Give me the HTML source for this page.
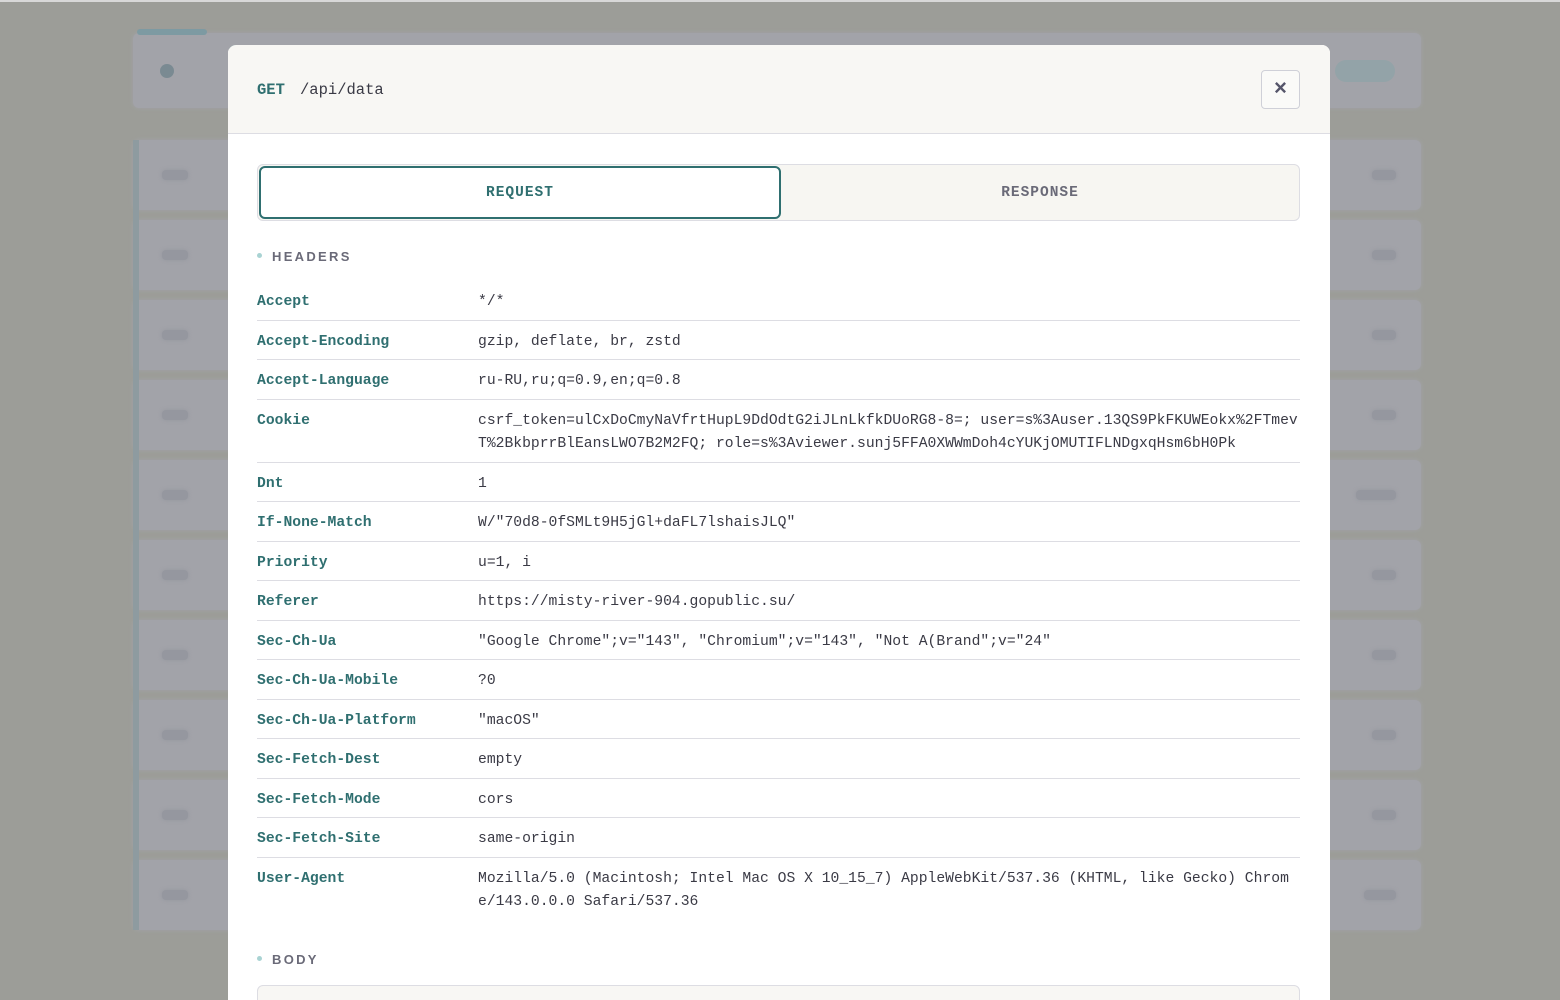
<!DOCTYPE html>
<html><head><meta charset="utf-8"><style>
*{box-sizing:border-box;margin:0;padding:0}
html,body{width:1560px;height:1000px;overflow:hidden}
body{background:#9c9d98;font-family:"Liberation Sans",sans-serif;position:relative}
.topline{position:absolute;left:0;top:0;width:1560px;height:2px;background:#d8d8d8}
.bg{position:absolute;background:#a2a3a9;border-radius:6px;box-shadow:0 0 4px #a2a3a9}
.bgbar{position:absolute;left:133px;width:6px;background:#8e9ba0}
.blob{position:absolute;background:#95979f;border-radius:4px;height:10px;box-shadow:0 0 4px #95979f}
.modal{position:absolute;left:228px;top:45px;width:1102px;height:955px;background:#fff;border-radius:8px 8px 0 0;overflow:hidden}
.accent{position:absolute;left:0;top:0;width:74px;height:4px;background:#3a7e80;border-radius:0 0 3px 0}
.head{height:89px;background:#f8f7f4;border-bottom:1px solid #dddde3;position:relative;font-family:"Liberation Mono",monospace;font-size:15.5px}
.head .m{position:absolute;left:29px;top:36px;color:#2f6f70;font-weight:bold}
.head .p{position:absolute;left:72px;top:36px;color:#3a3a45}
.close{position:absolute;left:1033px;top:25px;width:39px;height:39px;border:1px solid #cfd0d8;border-radius:4px;background:#fafaf8;text-align:center;line-height:38px;font-size:22px;color:#55556a;font-weight:bold}
.tabs{position:absolute;left:29px;top:119px;width:1043px;height:57px;border:1px solid #dddde3;border-radius:6px;background:#f7f6f2}
.tab1{position:absolute;left:1px;top:1px;width:522px;height:53px;border:2.5px solid #2f6f70;border-radius:6px;background:#fff;text-align:center;line-height:50px;font-family:"Liberation Mono",monospace;font-size:14.5px;font-weight:bold;color:#2f6f70;letter-spacing:1px}
.tab2{position:absolute;left:523px;top:0;width:518px;height:55px;text-align:center;line-height:57px;font-family:"Liberation Mono",monospace;font-size:14.5px;font-weight:bold;color:#6a6a78;letter-spacing:1px}
.sec{position:absolute;left:29px;font-family:"Liberation Sans",sans-serif;font-size:13px;font-weight:bold;color:#6a6a78;letter-spacing:2.3px}
.sec:before{content:"";display:inline-block;width:5px;height:5px;border-radius:50%;background:#a9d3d3;margin-right:10px;vertical-align:middle;position:relative;top:-2px}
.rows{position:absolute;left:29px;top:236px;width:1043px;font-family:"Liberation Mono",monospace;font-size:14.7px;line-height:23.5px}
.r{display:flex;padding:10px 0 5px;border-bottom:1px solid #dddde3}
.r:last-child{border-bottom:none}
.k{width:221px;flex:none;color:#2f6f70;font-weight:bold}
.v{flex:1;color:#3a3a45;word-break:break-all}
.body{position:absolute;left:29px;top:940px;width:1043px;height:60px;border:1px solid #dddde3;border-radius:6px;background:#f8f7f4}
</style></head><body>
<div class="topline"></div>
<div class="bg" style="left:133px;top:33px;width:1288px;height:75px"></div>
<div style="position:absolute;left:137px;top:29px;width:70px;height:6px;background:#7d9aa2;border-radius:3px"></div>
<div style="position:absolute;left:160px;top:64px;width:14px;height:14px;background:#7a8a92;border-radius:50%"></div>
<div style="position:absolute;left:1335px;top:60px;width:60px;height:22px;background:#93a3a8;border-radius:11px"></div>
<div class="bg" style="left:133px;top:140px;width:1288px;height:70px"></div>
<div class="bg" style="left:133px;top:220px;width:1288px;height:70px"></div>
<div class="bg" style="left:133px;top:300px;width:1288px;height:70px"></div>
<div class="bg" style="left:133px;top:380px;width:1288px;height:70px"></div>
<div class="bg" style="left:133px;top:460px;width:1288px;height:70px"></div>
<div class="bg" style="left:133px;top:540px;width:1288px;height:70px"></div>
<div class="bg" style="left:133px;top:620px;width:1288px;height:70px"></div>
<div class="bg" style="left:133px;top:700px;width:1288px;height:70px"></div>
<div class="bg" style="left:133px;top:780px;width:1288px;height:70px"></div>
<div class="bg" style="left:133px;top:860px;width:1288px;height:70px"></div>
<div class="bgbar" style="top:140px;height:790px"></div>
<div class="blob" style="left:162px;top:170px;width:26px"></div>
<div class="blob" style="left:162px;top:250px;width:26px"></div>
<div class="blob" style="left:162px;top:330px;width:26px"></div>
<div class="blob" style="left:162px;top:410px;width:26px"></div>
<div class="blob" style="left:162px;top:490px;width:26px"></div>
<div class="blob" style="left:162px;top:570px;width:26px"></div>
<div class="blob" style="left:162px;top:650px;width:26px"></div>
<div class="blob" style="left:162px;top:730px;width:26px"></div>
<div class="blob" style="left:162px;top:810px;width:26px"></div>
<div class="blob" style="left:162px;top:890px;width:26px"></div>
<div class="blob" style="left:1372px;top:170px;width:24px"></div>
<div class="blob" style="left:1372px;top:250px;width:24px"></div>
<div class="blob" style="left:1372px;top:330px;width:24px"></div>
<div class="blob" style="left:1372px;top:410px;width:24px"></div>
<div class="blob" style="left:1356px;top:490px;width:40px"></div>
<div class="blob" style="left:1372px;top:570px;width:24px"></div>
<div class="blob" style="left:1372px;top:650px;width:24px"></div>
<div class="blob" style="left:1372px;top:730px;width:24px"></div>
<div class="blob" style="left:1372px;top:810px;width:24px"></div>
<div class="blob" style="left:1364px;top:890px;width:32px"></div>
<div class="modal">
<div class="accent"></div>
<div class="head"><span class="m">GET</span><span class="p">/api/data</span><div class="close">×</div></div>
<div class="tabs"><div class="tab1">REQUEST</div><div class="tab2">RESPONSE</div></div>
<div class="sec" style="top:204px">HEADERS</div>
<div class="rows">
<div class="r"><div class="k">Accept</div><div class="v">*/*</div></div>
<div class="r"><div class="k">Accept-Encoding</div><div class="v">gzip, deflate, br, zstd</div></div>
<div class="r"><div class="k">Accept-Language</div><div class="v">ru-RU,ru;q=0.9,en;q=0.8</div></div>
<div class="r"><div class="k">Cookie</div><div class="v">csrf_token=ulCxDoCmyNaVfrtHupL9DdOdtG2iJLnLkfkDUoRG8-8=; user=s%3Auser.13QS9PkFKUWEokx%2FTmevT%2BkbprrBlEansLWO7B2M2FQ; role=s%3Aviewer.sunj5FFA0XWWmDoh4cYUKjOMUTIFLNDgxqHsm6bH0Pk</div></div>
<div class="r"><div class="k">Dnt</div><div class="v">1</div></div>
<div class="r"><div class="k">If-None-Match</div><div class="v">W/"70d8-0fSMLt9H5jGl+daFL7lshaisJLQ"</div></div>
<div class="r"><div class="k">Priority</div><div class="v">u=1, i</div></div>
<div class="r"><div class="k">Referer</div><div class="v">https://misty-river-904.gopublic.su/</div></div>
<div class="r"><div class="k">Sec-Ch-Ua</div><div class="v">"Google Chrome";v="143", "Chromium";v="143", "Not A(Brand";v="24"</div></div>
<div class="r"><div class="k">Sec-Ch-Ua-Mobile</div><div class="v">?0</div></div>
<div class="r"><div class="k">Sec-Ch-Ua-Platform</div><div class="v">"macOS"</div></div>
<div class="r"><div class="k">Sec-Fetch-Dest</div><div class="v">empty</div></div>
<div class="r"><div class="k">Sec-Fetch-Mode</div><div class="v">cors</div></div>
<div class="r"><div class="k">Sec-Fetch-Site</div><div class="v">same-origin</div></div>
<div class="r"><div class="k">User-Agent</div><div class="v">Mozilla/5.0 (Macintosh; Intel Mac OS X 10_15_7) AppleWebKit/537.36 (KHTML, like Gecko) Chrome/143.0.0.0 Safari/537.36</div></div>
</div>
<div class="sec" style="top:907px">BODY</div>
<div class="body"></div>
</div>
</body></html>
